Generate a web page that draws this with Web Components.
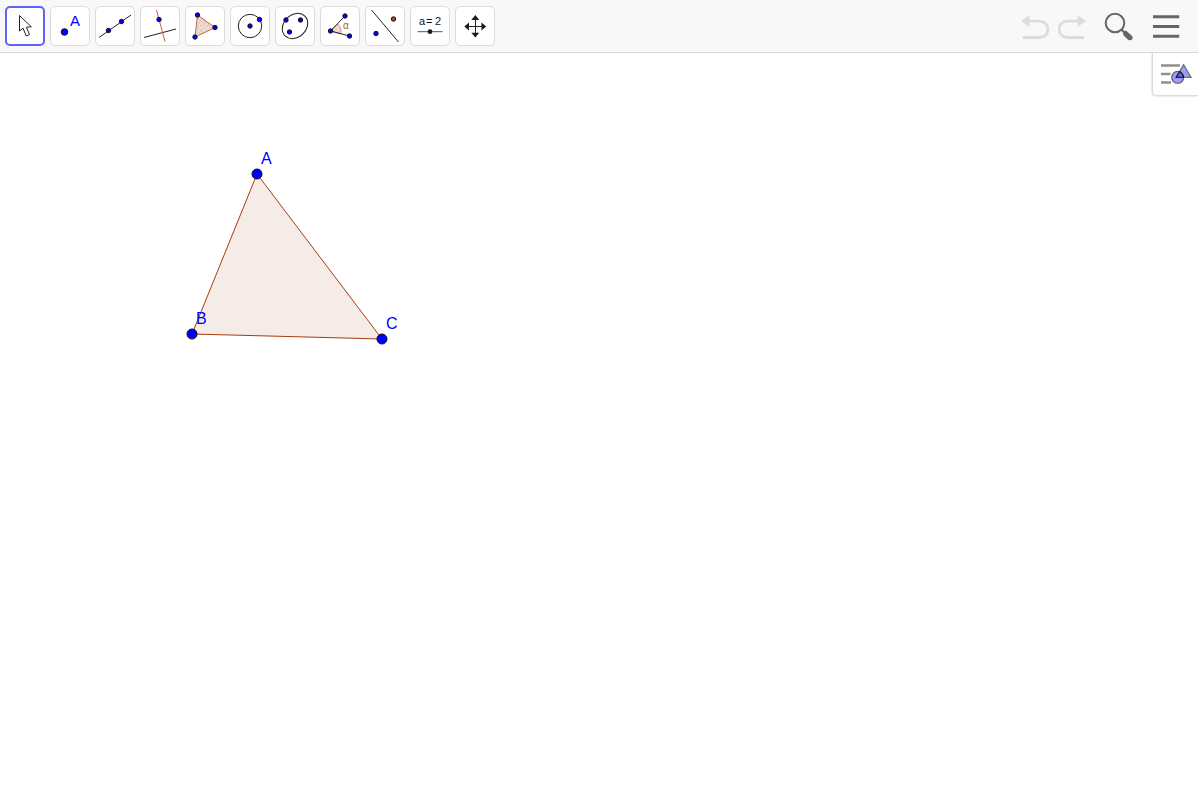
<!DOCTYPE html>
<html lang="en">
<head>
<meta charset="utf-8">
<title>Geometry</title>
<style>
html, body { height: 100%; }
body { margin: 0; background: #fff; font-family: "Liberation Sans", Arial, sans-serif; }
</style>
</head>
<body>
<geo-app>
  <geo-toolbar slot="bar">
    <geo-tool label="Move" selected><svg viewBox="0 0 32 32"><path d="M10.5 5.5V21L14 18.2L17.3 26L20.5 24.6L17.4 17.2L22.3 16.8Z" fill="#fff" stroke="#222" stroke-width="1"/></svg></geo-tool>
    <geo-tool label="Point"><svg viewBox="0 0 32 32"><circle class="p" cx="10.5" cy="22" r="3.3"/><text x="16" y="16" font-size="15" fill="#00f">A</text></svg></geo-tool>
    <geo-tool label="Line"><svg viewBox="0 0 32 32"><path class="k" d="M0 27.5L32 5"/><circle class="p" cx="9.5" cy="20.5" r="2.2"/><circle class="p" cx="22.5" cy="11.5" r="2.2"/></svg></geo-tool>
    <geo-tool label="Perpendicular line"><svg viewBox="0 0 32 32"><path class="k" d="M0 27.5L32 19"/><path class="r" d="M12.5 0L21 31.5"/><circle class="p" cx="15" cy="9.5" r="2.2"/></svg></geo-tool>
    <geo-tool label="Polygon"><svg viewBox="0 0 32 32"><path class="r" style="fill:#ecdfdb" d="M8.5 5L26 17.5L6 27Z"/><path d="M9 9L22 19M8 12L19 21M8 16L15 23M7 20L12 24M9 7L24 18M8 24L21 14M8 20L17 11M8 16L13 9" stroke="#c98b78" stroke-width=".5" stroke-dasharray="1 1" fill="none"/><circle class="p" cx="8.5" cy="5" r="2.2"/><circle class="p" cx="26" cy="17.5" r="2.2"/><circle class="p" cx="6" cy="27" r="2.2"/></svg></geo-tool>
    <geo-tool label="Circle"><svg viewBox="0 0 32 32"><circle class="k" cx="16" cy="16" r="11.7"/><circle class="p" cx="16" cy="16" r="2.2"/><circle class="p" cx="25.5" cy="9.5" r="2.2"/></svg></geo-tool>
    <geo-tool label="Ellipse"><svg viewBox="0 0 32 32"><ellipse class="k" cx="16" cy="16" rx="14" ry="11.2" transform="rotate(-45 16 16)"/><circle class="p" cx="7" cy="10" r="2.2"/><circle class="p" cx="21.5" cy="10" r="2.2"/><circle class="p" cx="10.5" cy="22" r="2.2"/></svg></geo-tool>
    <geo-tool label="Angle"><svg viewBox="0 0 32 32"><path d="M6.5 21L13.5 13.8Q17.5 17 17 23.8Z" fill="#f3d5c9" stroke="#b5552f" stroke-width=".8" stroke-dasharray="1.5 .5"/><path class="k" d="M21 6L6.5 21L25.5 26"/><circle class="p" cx="6.5" cy="21" r="2.2"/><circle class="p" cx="21" cy="6" r="2.2"/><circle class="p" cx="25.5" cy="26" r="2.2"/><text x="19" y="19" font-size="10" fill="#b5552f">α</text></svg></geo-tool>
    <geo-tool label="Reflect about line"><svg viewBox="0 0 32 32"><path class="k" d="M2.5 0L29.5 32"/><circle class="p" cx="7" cy="23.5" r="2.2"/><circle class="p" style="fill:#b5431f" cx="24.5" cy="9" r="2.2"/></svg></geo-tool>
    <geo-tool label="Slider"><svg viewBox="0 0 32 32"><text y="15" font-size="11" fill="#111"><tspan x="5">a</tspan><tspan x="12">=</tspan><tspan x="21">2</tspan></text><path d="M3.5 21.7H28.5" stroke="#555"/><circle cx="16" cy="21.7" r="2.4" fill="#1c1c24"/></svg></geo-tool>
    <geo-tool label="Move graphics view"><svg viewBox="0 0 32 32"><path class="k" d="M16.5 9V24M8 16.5H24"/><path fill="#1c1c24" d="M16.3 5L20.3 10H12.3ZM16.3 27.5L20.3 22.8H12.3ZM5.3 16.5L10 12.5V20.5ZM27.3 16.5L22.4 12.5V20.5Z"/></svg></geo-tool>
    <geo-action slot="end" label="Undo" disabled><svg width="28" height="32" viewBox="0 0 28 32"><path d="M8 11.2H18.8A8 8 0 0 1 18.8 27.5H2" fill="none" stroke="#dcdcdc" stroke-width="2.8"/><path d="M0 11L8.5 5V17Z" fill="#dcdcdc"/></svg></geo-action>
    <geo-action slot="end" label="Redo" disabled><svg width="28" height="32" viewBox="0 0 28 32"><path d="M20 11.2H9.2A8 8 0 0 0 9.2 27.5H26" fill="none" stroke="#dcdcdc" stroke-width="2.8"/><path d="M28 11L19.5 5V17Z" fill="#dcdcdc"/></svg></geo-action>
    <geo-action slot="end" class="wide" label="Search"><svg width="30" height="32" viewBox="0 0 30 32"><circle cx="11" cy="13" r="9.3" fill="none" stroke="#666" stroke-width="2"/><path d="M17.4 19.4L21 23" stroke="#666" stroke-width="2.2"/><path d="M19 22.5L22 20.5L28 26Q29.5 28 28 29.5T24 29.8L19.3 25Z" fill="#666"/></svg></geo-action>
    <geo-action slot="end" class="wide" label="Menu"><svg width="28" height="32" viewBox="0 0 28 32"><path d="M1 6.8H27.2M1 16.5H27.2M1 26.3H27.2" stroke="#666" stroke-width="3"/></svg></geo-action>
  </geo-toolbar>
  <geo-board></geo-board>
</geo-app>

<script>
class GeoBase extends HTMLElement {
  connectedCallback() {
    if (!this.shadowRoot) this.attachShadow({ mode: "open" }).innerHTML = this.render();
  }
}

customElements.define("geo-app", class extends GeoBase {
  render() {
    return `<style>
      :host { display: flex; flex-direction: column; min-height: 100%; padding-right: 2px; box-sizing: border-box; }
      ::slotted(geo-board) { flex: 1; }
    </style><slot name="bar"></slot><slot></slot>`;
  }
});

customElements.define("geo-toolbar", class extends GeoBase {
  render() {
    return `<style>
      :host { display: flex; justify-content: space-between; align-items: center; padding: 6px 18px 6px 5px; background: #f8f8f8; border-bottom: 1px solid #d8d8d8; }
      nav { display: flex; gap: 5px; }
      .end { display: flex; gap: 9px; }
      ::slotted(.wide) { margin-left: 9px; }
    </style><nav aria-label="Tools"><slot></slot></nav><div class="end"><slot name="end"></slot></div>`;
  }
});

customElements.define("geo-tool", class extends GeoBase {
  connectedCallback() {
    super.connectedCallback();
    this.shadowRoot.querySelector("div").append(...this.childNodes);
  }
  render() {
    return `<style>
      :host { display: block; }
      button { display: grid; place-items: center; width: 40px; height: 40px; padding: 0; background: #fff; border: 1px solid #dcdcdc; border-radius: 5px; font-family: inherit; }
      :host([selected]) button { border: 2px solid #6161ff; }
      div { display: grid; width: 32px; height: 32px; }
      svg { width: 32px; height: 32px; font-family: "Liberation Sans", Arial, sans-serif; }
      .p { fill: #00f; stroke: #111; stroke-width: 1; }
      .k { fill: none; stroke: #222; stroke-width: 1; }
      .r { fill: none; stroke: #c0663f; stroke-width: 1; }
    </style><button type="button" aria-label="${this.getAttribute("label")}"><div></div></button>`;
  }
});

customElements.define("geo-action", class extends GeoBase {
  render() {
    return `<style>
      :host { display: block; }
      button { display: block; padding: 0; border: 0; background: none; }
      ::slotted(svg) { display: block; }
    </style><button type="button" aria-label="${this.getAttribute("label")}" ${this.hasAttribute("disabled") ? "disabled" : ""}><slot></slot></button>`;
  }
});

customElements.define("geo-board", class extends GeoBase {
  render() {
    return `<style>
      :host { display: flex; align-items: flex-start; background: #fff; }
      .plane { flex: 1; min-width: 0; height: 360px; overflow: visible; font-family: "Liberation Sans", Arial, sans-serif; }
      button { display: grid; place-items: center; width: 46px; height: 43px; padding: 0; background: #fff; border: solid #dcdcdc; border-width: 0 0 1px 1px; border-radius: 0 0 0 5px; box-shadow: -1px 1px 1px #f4e8e4; }
    </style>
    <svg class="plane" role="img" aria-label="Triangle ABC">
      <path d="M257 121L192 281L382 286Z" fill="#f5ebe7" stroke="#a83c10"/>
      <g fill="#00f" stroke="#111"><circle cx="257" cy="121" r="5"/><circle cx="192" cy="281" r="5"/><circle cx="382" cy="286" r="5"/></g>
      <g fill="#00f" font-size="16"><text x="261" y="111">A</text><text x="196" y="271">B</text><text x="386" y="276">C</text></g>
    </svg>
    <button type="button" aria-label="Style bar"><svg width="32" height="24" viewBox="0 0 32 24">
      <path d="M1 3.5H20M1 12H11M1 20.5H11" stroke="#909090" stroke-width="2.6"/>
      <path d="M23.5 0L33 17H14Z" fill="#fff"/><circle cx="17.5" cy="15" r="7.8" fill="#fff"/>
      <circle cx="17.7" cy="15.3" r="6" fill="#9c9cff" stroke="#555" stroke-width="1.1"/>
      <path d="M23.5 2.7L31 15.3H16.2Z" fill="#9c9cff" stroke="#707070" stroke-width="1.3"/>
      <path d="M16.2 15.3L19.8 9.5Q23.2 11.5 23.6 15.3Z" fill="#6464ff" stroke="#111" stroke-width="1.1"/>
    </svg></button>`;
  }
});
</script>
</body>
</html>
